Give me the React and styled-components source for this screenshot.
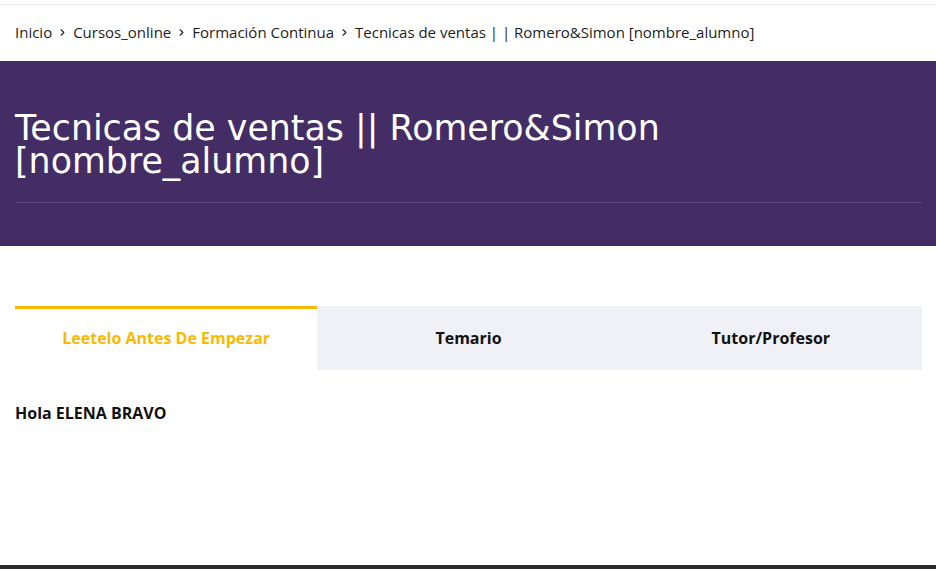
import React, { useState } from "react";
import styled, { createGlobalStyle } from "styled-components";
import { ChevronRight } from "lucide-react";

const GlobalStyle = createGlobalStyle`
	body {
		margin: 0;
		background: #fff;
		font-family: "Open Sans", "Liberation Sans", sans-serif;
	}
`;

const Page = styled.div`
	display: flex;
	flex-direction: column;
	min-height: 569px;
	padding-top: 4px;
	box-sizing: border-box;
`;

const Crumbs = styled.nav`
	display: flex;
	align-items: center;
	gap: 4px;
	height: 54px;
	padding: 0 15px 2px;
	border-top: 1px solid #e6e6e6;
	font-size: 15px;
	color: #1d1d1d;
`;

const Sep = styled(ChevronRight)`
	color: #222;
	flex: none;
	margin: 0 1px;
`;

const Hero = styled.header`
	background: #432d64;
	padding: 51px 14px 43px 15px;
`;

const Title = styled.h1`
	margin: 0;
	font-family: "DejaVu Sans", sans-serif;
	font-weight: 400;
	font-size: 34.8px;
	line-height: 33px;
	color: #fff;
	padding-bottom: 24px;
	border-bottom: 1px solid #5c4a7a;
`;

const Tabs = styled.div`
	display: grid;
	grid-template-columns: repeat(3, 1fr);
	margin: 60px 14px 0 15px;
`;

const Tab = styled.button`
	height: 64px;
	border: 0;
	border-top: 3px solid ${(p) => (p.$active ? "#fbb800" : "#f0f1f6")};
	background: ${(p) => (p.$active ? "#fff" : "#f0f1f6")};
	color: ${(p) => (p.$active ? "#fbb800" : "#111")};
	font-family: "Open Sans", sans-serif;
	font-weight: 700;
	font-size: 16px;
	cursor: pointer;
	padding: 0 0 4px;
`;

const Greeting = styled.p`
	margin: 32px 15px 0;
	font-weight: 700;
	font-size: 16px;
	color: #111;
`;

const Footer = styled.div`
	margin-top: auto;
	height: 4px;
	background: #2b2b2b;
`;

const crumbs = ["Inicio", "Cursos_online", "Formación Continua", "Tecnicas de ventas | | Romero&Simon [nombre_alumno]"];
const tabs = ["Leetelo Antes De Empezar", "Temario", "Tutor/Profesor"];

export default function App() {
	const [active, setActive] = useState(0);

	return (
		<Page>
			<GlobalStyle />
			<Crumbs>
				{crumbs.map((c, i) => (
					<React.Fragment key={c}>
						{i > 0 && <Sep size={11} strokeWidth={2.4} />}
						<span>{c}</span>
					</React.Fragment>
				))}
			</Crumbs>
			<Hero>
				<Title>
					Tecnicas de ventas || Romero&amp;Simon
					<br />
					[nombre_alumno]
				</Title>
			</Hero>
			<Tabs>
				{tabs.map((t, i) => (
					<Tab key={t} $active={active === i} onClick={() => setActive(i)}>
						{t}
					</Tab>
				))}
			</Tabs>
			<Greeting>Hola ELENA BRAVO</Greeting>
			<Footer />
		</Page>
	);
}
